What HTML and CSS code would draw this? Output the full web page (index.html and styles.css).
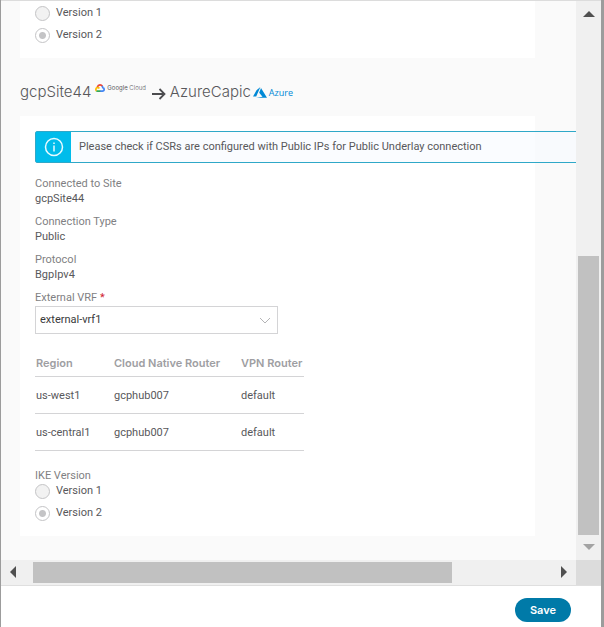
FILE: index.html
```html
<!DOCTYPE html>
<html lang="en">
<head>
<meta charset="utf-8">
<title>Site connectivity</title>
<link rel="stylesheet" href="styles.css">
</head>
<body>
<main class="dialog">
  <div class="viewport">
    <div class="content">
      <section class="card card-top">
        <div class="radios" role="radiogroup" aria-label="IKE Version">
          <label class="radio"><input type="radio" name="ike-a"><span>Version 1</span></label>
          <label class="radio"><input type="radio" name="ike-a" checked><span>Version 2</span></label>
        </div>
      </section>
      <h2 class="heading">
        <span>gcpSite44</span>
        <span class="gcp">
          <svg width="10" height="8" viewBox="0 0 20 16" fill="none" stroke-width="3.4">
            <path d="M4.500 6.500C5.500 3.500 7.500 1.800 10 1.800c2 0 3.700 1 4.700 2.700" stroke="#ea4335"/>
            <path d="M14.200 4c.8 1 1.200 2 1.300 3.200 2 .3 2.800 1.700 2.800 3.300 0 2.200-1.600 3.700-3.600 3.700H10" stroke="#4285f4"/>
            <path d="M10.500 14.200H5.200c-1.200 0-2-.4-2.700-1.200" stroke="#34a853"/>
            <path d="M3 13.500C.8 11.500 1.500 7.500 5 7c1.800 0 3 .8 3.600 2" stroke="#fbbc05"/>
          </svg>
          <span>Google<span class="thin"> Cloud</span></span>
        </span>
        <svg class="arrow" width="14" height="12" viewBox="0 0 14 12" fill="none" stroke="#4c4c4f" stroke-width="1.800"><path d="M0 6h12.500M7.500 1l5 5-5 5"/></svg>
        <span>AzureCapic</span>
        <span class="azure">
          <svg width="14" height="11" viewBox="0 0 14 11" fill="#0089d6"><path d="M7.400 0 3.500 3.300 0 9.600h3.200zM8 1 6.200 5.800l3.300 4-6.300 1H14z"/></svg>
          <span>Azure</span>
        </span>
      </h2>
      <section class="card">
        <div class="alert" role="status">
          <span class="alert-icon">
            <svg width="20" height="20" viewBox="0 0 20 20" fill="none" stroke="#e8faff"><circle cx="10" cy="10" r="8.500" stroke-width="1.500"/><path d="M10 8.500v6" stroke-width="1.500"/><path d="M10 5.500V7" stroke-width="1.500"/></svg>
          </span>
          <span class="alert-text">Please check if CSRs are configured with Public IPs for Public Underlay connection</span>
        </div>
        <dl class="fields">
          <div><dt>Connected to Site</dt><dd>gcpSite44</dd></div>
          <div><dt>Connection Type</dt><dd>Public</dd></div>
          <div><dt>Protocol</dt><dd>BgpIpv4</dd></div>
        </dl>
        <div class="vrf">
          <label for="vrf">External VRF <span class="required">*</span></label>
          <div class="select">
            <select id="vrf"><option>external-vrf1</option></select>
            <svg width="12" height="8" viewBox="0 0 12 8" fill="none" stroke="#b4b4b6"><path d="m1 1 5 5 5-5"/></svg>
          </div>
        </div>
        <table class="routers">
          <thead><tr><th>Region</th><th>Cloud Native Router</th><th>VPN Router</th></tr></thead>
          <tbody>
            <tr><td>us-west1</td><td>gcphub007</td><td>default</td></tr>
            <tr><td>us-central1</td><td>gcphub007</td><td>default</td></tr>
          </tbody>
        </table>
        <fieldset class="ike">
          <legend>IKE Version</legend>
          <div class="radios">
            <label class="radio"><input type="radio" name="ike-b"><span>Version 1</span></label>
            <label class="radio"><input type="radio" name="ike-b" checked><span>Version 2</span></label>
          </div>
        </fieldset>
      </section>
    </div>
    <div class="vbar" aria-hidden="true">
      <svg width="12" height="6" viewBox="0 0 12 6" fill="#505050"><path d="m6 0 6 6H0z"/></svg>
      <div class="vtrack"><div class="vthumb"></div></div>
      <svg width="12" height="6" viewBox="0 0 12 6" fill="#a3a3a3"><path d="m6 6 6-6H0z"/></svg>
    </div>
    <div class="hbar" aria-hidden="true">
      <svg width="6" height="12" viewBox="0 0 6 12" fill="#505050"><path d="m0 6 6-6v12z"/></svg>
      <div class="htrack"><div class="hthumb"></div></div>
      <svg width="6" height="12" viewBox="0 0 6 12" fill="#505050"><path d="M6 6 0 0v12z"/></svg>
    </div>
    <div class="corner"></div>
  </div>
  <footer class="footer"><button class="save" type="button">Save</button></footer>
</main>
</body>
</html>
```
FILE: styles.css
```css
* { box-sizing: border-box; }

body {
  margin: 0;
  padding: 0 3px 0 1px;
  background: #9c9c9c;
  color: #58585b;
  font: 11px/15px Roboto, "Liberation Sans", sans-serif;
}

.dialog {
  display: flex;
  flex-direction: column;
  min-height: 100vh;
  background: #fff;
  border-top: 1px solid #dcdcdc;
}

.viewport {
  display: grid;
  grid-template-columns: minmax(0, 1fr) 25px;
  grid-template-rows: auto 25px;
  border-bottom: 1px solid #dfdfdf;
}

.content {
  overflow: hidden;
  padding: 0 41px 24px 19px;
  background: #fafafa;
}

.card {
  padding: 15px 0 16px 15px;
  background: #fff;
}

.card-top { padding-top: 4px; }

.radios {
  display: grid;
  gap: 7px;
}

.radio {
  display: flex;
  gap: 6px;
  height: 15px;
}

.radio input {
  appearance: none;
  width: 15px;
  height: 15px;
  margin: 1px 0 0;
  border: 1px solid #c4c4c6;
  border-radius: 50%;
  background: #f2f2f2;
}

.radio input:checked {
  background: radial-gradient(circle, #c4c4c6 3px, #fff 4px);
}

.heading {
  display: flex;
  align-items: center;
  height: 58px;
  margin: 0;
  padding-top: 10px;
  font: 300 15px/20px Inter, "Liberation Sans", sans-serif;
  white-space: nowrap;
}

.gcp {
  display: flex;
  align-items: center;
  gap: 2px;
  margin: 0 6px 8px 4px;
  font-size: 6px;
  font-weight: 400;
  line-height: 8px;
}

.thin { font-weight: 300; }

.arrow { margin: 3px 4px 0 0; }

.azure {
  display: flex;
  align-items: center;
  gap: 2px;
  margin: 1px 0 0 2px;
  color: #0089d6;
  font: 400 9px/12px "Open Sans", sans-serif;
}

.alert {
  display: flex;
  align-items: stretch;
  height: 32px;
  margin-right: -45px;
  border: 1px solid #2fa8c8;
  border-radius: 2px;
  background: rgb(245 250 255 / 50%);
}

.alert-icon {
  display: grid;
  place-items: center;
  width: 35px;
  background: #00bceb;
}

.alert-text {
  padding-left: 8px;
  line-height: 29px;
}

.fields {
  display: grid;
  gap: 8px;
  margin: 13px 0 8px;
}

dt, .vrf label, legend { color: #7f7f83; }

dd { margin: 0; }

.vrf label { display: block; }

.required { color: #cf2030; }

.select {
  position: relative;
  max-width: 243px;
  margin-top: 1px;
}

.select select {
  appearance: none;
  display: block;
  width: 100%;
  height: 28px;
  padding: 0 24px 2px 4px;
  border: 1px solid #d4d4d6;
  border-radius: 0;
  background: #fff;
  color: #39393b;
  font: inherit;
}

.select svg {
  position: absolute;
  top: 11px;
  right: 7px;
  pointer-events: none;
}

.routers {
  width: 269px;
  margin-top: 15px;
  border-collapse: collapse;
  table-layout: fixed;
}

.routers th, .routers td {
  height: 37px;
  padding: 2px 1px 0;
  border-bottom: 1px solid #d4d4d6;
  text-align: left;
  white-space: nowrap;
}

.routers th {
  width: 78px;
  height: 27px;
  color: #9e9ea2;
  font-family: Inter, "Liberation Sans", sans-serif;
  font-weight: 600;
}

.routers th:nth-child(2) { width: 127px; }
.routers th:nth-child(3) { width: 64px; }

.ike {
  margin: 17px 0 0;
  padding: 0;
  border: 0;
}

legend { padding: 0; }

.vbar, .hbar {
  display: flex;
  align-items: center;
  background: #f0f0f0;
}

.vbar {
  flex-direction: column;
  padding: 10px 0;
}

.vtrack {
  display: flex;
  flex-direction: column;
  justify-content: flex-end;
  flex: 1;
  width: 21px;
  margin: 11px 0 9px;
}

.vthumb {
  height: 55%;
  background: #c1c1c1;
}

.hbar { padding: 0 9px; }

.htrack {
  flex: 1;
  height: 21px;
  margin: 0 17px;
}

.hthumb {
  width: 82%;
  height: 100%;
  background: #c1c1c1;
}

.corner { background: #dcdcdc; }

.footer {
  display: flex;
  justify-content: flex-end;
  padding: 12px 30px 5px;
}

.save {
  width: 56px;
  height: 24px;
  padding: 0;
  border: 0;
  border-radius: 12px;
  background: #007aa8;
  color: #fff;
  font: 600 11px/24px Inter, "Liberation Sans", sans-serif;
}
```
